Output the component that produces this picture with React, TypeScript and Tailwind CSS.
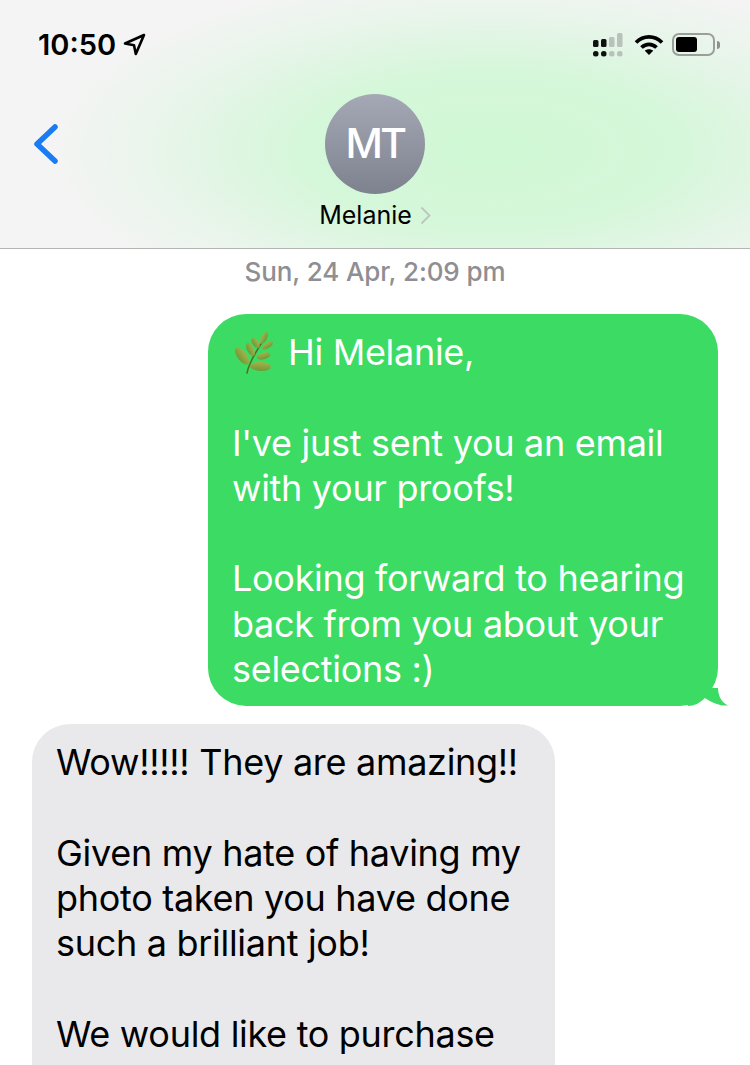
const SENT = `I've just sent you an email
with your proofs!

Looking forward to hearing
back from you about your
selections :)`;

const RECEIVED = `Wow!!!!! They are amazing!!

Given my hate of having my
photo taken you have done
such a brilliant job!

We would like to purchase
some more poses and`;

function LocationArrow() {
  return (
    <svg width="23" height="23" viewBox="0 0 23 23" fill="none" stroke="#000" strokeWidth="2.6" strokeLinejoin="round">
      <path d="M21 2 L2 10.5 L11 12.2 L12.8 21 Z" />
    </svg>
  );
}

function SignalBars() {
  return (
    <svg width="30" height="24" viewBox="0 0 30 24">
      <rect x="0" y="7" width="5.5" height="7" rx="1.5" fill="#111" />
      <rect x="8" y="6" width="5.5" height="8" rx="1.5" fill="#111" />
      <rect x="16" y="4" width="5.5" height="10" rx="1.5" fill="#b8c2ba" />
      <rect x="24" y="0" width="5.5" height="14" rx="1.5" fill="#b8c2ba" />
      <rect x="0" y="18" width="5.5" height="5.5" rx="2.5" fill="#111" />
      <rect x="8" y="18" width="5.5" height="5.5" rx="2.5" fill="#111" />
      <rect x="16" y="18" width="5.5" height="5.5" rx="2.5" fill="#b8c2ba" />
      <rect x="24" y="18" width="5.5" height="5.5" rx="2.5" fill="#b8c2ba" />
    </svg>
  );
}

function Wifi() {
  return (
    <svg width="30" height="22" viewBox="0 0 30 22" fill="none" stroke="#000" strokeWidth="3.8">
      <path d="M2 8.5 C9.5 1 20.5 1 28 8.5" />
      <path d="M7.5 13.5 C12 9.2 18 9.2 22.5 13.5" />
      <path d="M15 21 L10.8 16.8 C13 14.8 17 14.8 19.2 16.8 Z" fill="#000" stroke="none" />
    </svg>
  );
}

function Battery() {
  return (
    <div className="flex items-center gap-[2px]">
      <div className="w-[43px] h-[23px] rounded-[7px] border-2 border-[#9a9f9b] p-[2px]">
        <div className="w-[21px] h-full rounded-[3px] bg-black" />
      </div>
      <div className="w-[3px] h-[8px] rounded-r-full bg-[#8d918e]" />
    </div>
  );
}

// herb emoji, leaf coords taken from the reference crop
const LEAVES = [
  { cx: 18, cy: 31, rx: 10, ry: 4.6, a: 53 },
  { cx: 26.5, cy: 24.5, rx: 7, ry: 3.4, a: 62 },
  { cx: 31.5, cy: 18, rx: 5.8, ry: 3, a: 55 },
  { cx: 40, cy: 13, rx: 6.5, ry: 2.9, a: -63 },
  { cx: 43.5, cy: 20.5, rx: 6.2, ry: 2.8, a: -32 },
  { cx: 39.5, cy: 31, rx: 7, ry: 3.4, a: -15 },
  { cx: 36.5, cy: 41.5, rx: 10.5, ry: 4.4, a: 3 },
];

function Leaf() {
  return (
    <svg width="60" height="60" viewBox="0 0 60 60" className="shrink-0 ml-[-8px] mr-[4px] translate-y-[2px]">
      <defs>
        <linearGradient id="leaf" x1="0" y1="0" x2="0" y2="1">
          <stop offset="0" stopColor="#a8b04a" />
          <stop offset="1" stopColor="#6d9a35" />
        </linearGradient>
      </defs>
      <path d="M23 48 C25 38 32 26 41 13" fill="none" stroke="#4f6f22" strokeWidth="1.5" strokeLinecap="round" />
      {LEAVES.map((l, i) => (
        <ellipse key={i} cx={l.cx} cy={l.cy} rx={l.rx} ry={l.ry} fill="url(#leaf)" transform={`rotate(${l.a} ${l.cx} ${l.cy})`} />
      ))}
    </svg>
  );
}

export default function App() {
  return (
    <div className="w-[750px] h-[1065px] overflow-hidden bg-white font-['Inter',sans-serif] text-black">
      {/* Header */}
      <div className="h-[249px] border-b border-[#b4b6b4] bg-[#f3f4f3] bg-[radial-gradient(ellipse_430px_175px_at_490px_150px,#cff8d4_0%,#d6f7da_45%,#e9f5eb_78%,#f3f4f3_100%)]">
        <div className="flex items-center h-[94px] pl-[38px] pr-[30px] pb-[5px]">
          <span className="text-[29px] font-semibold leading-none">10:50</span>
          <span className="ml-[7px]"><LocationArrow /></span>
          <div className="ml-auto flex items-center gap-[8px]">
            <span className="mr-[1px]"><SignalBars /></span>
            <span className="ml-[2px]"><Wifi /></span>
            <Battery />
          </div>
        </div>
        <div className="grid grid-cols-[1fr_auto_1fr]">
          <div className="pl-[31px] pt-[27px]">
            <svg width="30" height="44" viewBox="0 0 30 44" fill="none" stroke="#1a7cf2" strokeWidth="5.5" strokeLinecap="round" strokeLinejoin="round">
              <path d="M24 6 L6 23 L24 40" />
            </svg>
          </div>
          <div className="flex flex-col items-center">
            <div className="w-[100px] h-[100px] rounded-full bg-gradient-to-b from-[#a5a9b5] to-[#7e828f] flex items-center justify-center text-white text-[41px] tracking-[-2.5px] font-medium">
              MT
            </div>
            <div className="flex items-center gap-[8px] mt-[6px] text-[25px] leading-[30px]">
              Melanie
              <svg width="11" height="19" viewBox="0 0 11 19" fill="none" stroke="#c0c4c0" strokeWidth="1.8">
                <path d="M1.5 1.5 L9.5 9.5 L1.5 17.5" />
              </svg>
            </div>
          </div>
          <div />
        </div>
      </div>

      {/* Messages */}
      <div className="flex flex-col text-[36px] leading-[45.3px] tracking-[-0.3px]">
        <p className="mt-[8px] text-center text-[26px] leading-[30px] tracking-[-0.1px] font-medium text-[#8e8e93]">
          Sun, 24 Apr, 2:09 pm
        </p>
        <div className="relative self-end mr-[32px] mt-[27px] w-[510px] h-[392px] rounded-[38px] bg-[#3bdb64] text-white pl-[24px] pt-[16px] whitespace-pre-wrap">
          <div className="flex items-center h-[45.3px]">
            <Leaf />
            Hi Melanie,
          </div>
          <div className="h-[45.3px]" />
          {SENT}
          <svg width="42" height="27" viewBox="0 0 42 27" className="absolute left-[480px] top-[366px]">
            <path d="M30 8 C30 16 34 23 40 25.5 C33 26 26 24 17 18 C12 23 6 26 0 26 L0 8 Z" fill="#3bdb64" />
          </svg>
        </div>
        <div className="ml-[32px] mt-[18px] w-[523px] rounded-[38px] bg-[#e9e9eb] pl-[24px] pt-[16px] pb-[15px] whitespace-pre-wrap">
          {RECEIVED}
        </div>
      </div>
    </div>
  );
}
